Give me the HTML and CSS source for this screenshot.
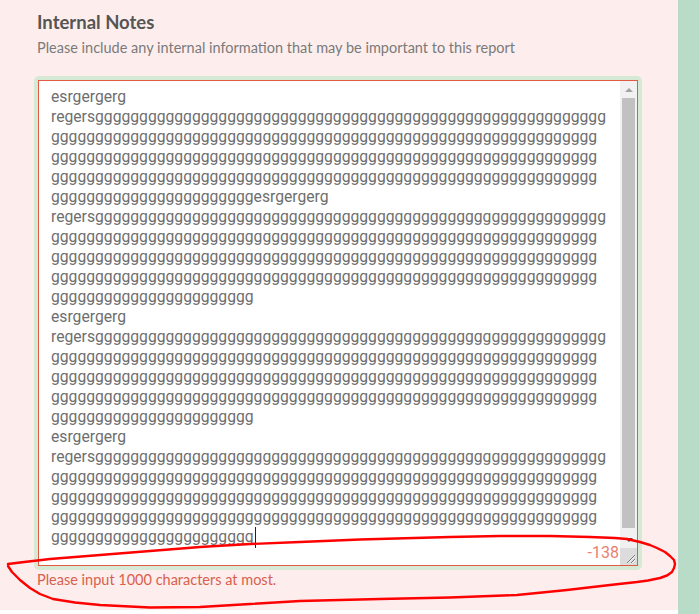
FILE: index.html
```html
<!DOCTYPE html>
<html lang="en">
<head>
<meta charset="utf-8">
<title>Internal Notes</title>
<link rel="stylesheet" href="styles.css">
</head>
<body>
<div class="page">
  <main class="panel">
    <h2 class="title">Internal Notes</h2>
    <p class="hint">Please include any internal information that may be important to this report</p>
    <div class="field">
      <div class="textarea">
        <div class="content">
          <div class="line">esrgergerg</div>
          <div class="line">regersgggggggggggggggggggggggggggggggggggggggggggggggggggggggggg</div>
          <div class="line">gggggggggggggggggggggggggggggggggggggggggggggggggggggggggggggg</div>
          <div class="line">gggggggggggggggggggggggggggggggggggggggggggggggggggggggggggggg</div>
          <div class="line">gggggggggggggggggggggggggggggggggggggggggggggggggggggggggggggg</div>
          <div class="line">gggggggggggggggggggggggesrgergerg</div>
          <div class="line">regersgggggggggggggggggggggggggggggggggggggggggggggggggggggggggg</div>
          <div class="line">gggggggggggggggggggggggggggggggggggggggggggggggggggggggggggggg</div>
          <div class="line">gggggggggggggggggggggggggggggggggggggggggggggggggggggggggggggg</div>
          <div class="line">gggggggggggggggggggggggggggggggggggggggggggggggggggggggggggggg</div>
          <div class="line">ggggggggggggggggggggggg</div>
          <div class="line">esrgergerg</div>
          <div class="line">regersgggggggggggggggggggggggggggggggggggggggggggggggggggggggggg</div>
          <div class="line">gggggggggggggggggggggggggggggggggggggggggggggggggggggggggggggg</div>
          <div class="line">gggggggggggggggggggggggggggggggggggggggggggggggggggggggggggggg</div>
          <div class="line">gggggggggggggggggggggggggggggggggggggggggggggggggggggggggggggg</div>
          <div class="line">ggggggggggggggggggggggg</div>
          <div class="line">esrgergerg</div>
          <div class="line">regersgggggggggggggggggggggggggggggggggggggggggggggggggggggggggg</div>
          <div class="line">gggggggggggggggggggggggggggggggggggggggggggggggggggggggggggggg</div>
          <div class="line">gggggggggggggggggggggggggggggggggggggggggggggggggggggggggggggg</div>
          <div class="line">gggggggggggggggggggggggggggggggggggggggggggggggggggggggggggggg</div>
          <div class="line">ggggggggggggggggggggggg<span class="caret"></span></div>
          <span class="counter">-138</span>
        </div>
        <div class="scrollbar">
          <div class="sb-btn"><span class="arrow-up"></span></div>
          <div class="sb-track"><div class="sb-thumb"></div></div>
          <div class="sb-btn"><span class="arrow-down"></span></div>
          <div class="resizer">
            <svg width="17" height="17" viewBox="0 0 17 17"><path d="M15 7 L7 15 M15 11 L11 15" stroke="#7a7a7a" stroke-width="1"/><path d="M15.5 7.7 L7.7 15.5 M15.5 11.7 L11.7 15.5" stroke="#f2f2f2" stroke-width="1"/></svg>
          </div>
        </div>
      </div>
    </div>
    <p class="error">Please input 1000 characters at most.</p>
  </main>
  <aside class="strip"></aside>
  <svg class="markup" width="699" height="614" viewBox="0 0 699 614">
    <path d="M8 564 L20 562.5 L50 559 L100 555 L150 551 L200 547 L250 544 L300 542 L360 539.5 L450 537 L500 536 L550 536 L590 537 L615 538 L627 539 L640 542 L650 545 L657 548 L665 552 L670 556 L674 560 L675 564 L674 568 L672 572 L667 575.5 L660 578 L648 580.5 L637 582 L610 585 L567 590 L517 595 L450 597.5 L380 599 L300 601 L250 604 L200 607 L150 607.5 L100 605 L75 602.5 L53 599 L40 594 L30 588 L20 580 L12 572 L8 566" fill="none" stroke="#ff0000" stroke-width="2.4" stroke-linejoin="round" stroke-linecap="round"/>
  </svg>
</div>
</body>
</html>
```
FILE: styles.css
```css
html, body {
  margin: 0;
  padding: 0;
  background: #ffffff;
}

.page {
  position: relative;
  display: flex;
  width: 699px;
  height: 614px;
  overflow: hidden;
}

.panel {
  width: 678px;
  height: 610px;
  box-sizing: border-box;
  padding: 10px 0 0 37px;
  background: #fdeeed;
  font-family: "Lato", "Liberation Sans", sans-serif;
}

.strip {
  width: 21px;
  height: 614px;
  background: #b8dcc7;
}

.title {
  margin: 0;
  font-size: 18.5px;
  line-height: 24px;
  font-weight: 700;
  color: #555555;
}

.hint {
  margin: 4px 0 0;
  font-size: 14.5px;
  line-height: 20px;
  color: #7a7a7a;
}

.field {
  margin: 18px 0 0 -3px;
  width: 608px;
  box-sizing: border-box;
  padding: 4px;
  border-radius: 5px;
  background: #d6e9d5;
}

.textarea {
  display: flex;
  height: 486px;
  box-sizing: border-box;
  border: 1px solid #e05a44;
  background: #ffffff;
}

.content {
  position: relative;
  flex: 1;
  padding: 6px 0 0 12px;
  overflow: hidden;
  font-family: "Roboto", "DejaVu Sans", sans-serif;
  font-size: 15.7px;
  line-height: 20px;
  color: #6e6e6e;
}

.line {
  white-space: pre;
  height: 20px;
}

.caret {
  display: inline-block;
  width: 1px;
  height: 21px;
  margin-left: 1px;
  background: #222222;
  vertical-align: -6px;
}

.counter {
  position: absolute;
  right: 1px;
  bottom: 2px;
  font-size: 16px;
  line-height: 20px;
  color: #e8826f;
}

.scrollbar {
  width: 17px;
  display: flex;
  flex-direction: column;
  background: #f1f1f1;
}

.sb-btn {
  height: 17px;
  display: flex;
  align-items: center;
  justify-content: center;
}

.arrow-up {
  width: 0;
  height: 0;
  border-left: 4px solid transparent;
  border-right: 4px solid transparent;
  border-bottom: 4px solid #a3a3a3;
}

.arrow-down {
  width: 0;
  height: 0;
  border-left: 4px solid transparent;
  border-right: 4px solid transparent;
  border-top: 4px solid #505050;
}

.sb-track {
  flex: 1;
}

.sb-thumb {
  height: 430px;
  margin: 0 2px;
  background: #c1c1c1;
}

.resizer {
  height: 17px;
  background: #dcdcdc;
}

.resizer svg {
  display: block;
}

.error {
  margin: 0;
  font-size: 14.5px;
  line-height: 20px;
  color: #d9604c;
}

.markup {
  position: absolute;
  left: 0;
  top: 0;
  pointer-events: none;
}
```
